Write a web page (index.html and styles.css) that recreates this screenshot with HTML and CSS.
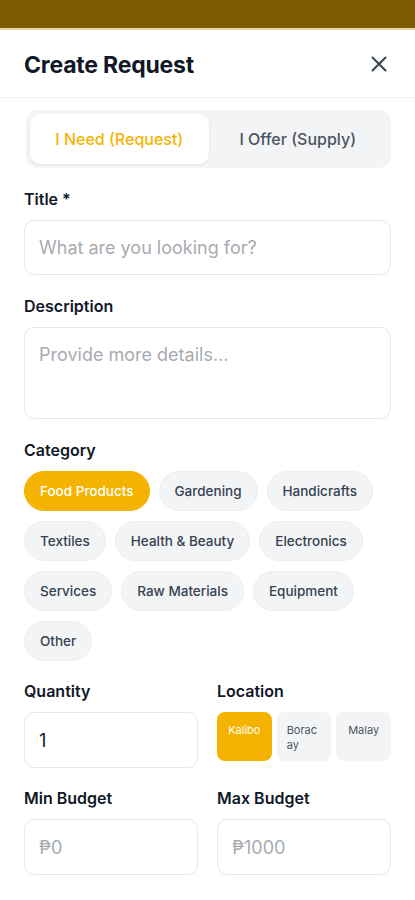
FILE: index.html
```html
<!DOCTYPE html>
<html lang="en">
<head>
  <meta charset="UTF-8">
  <meta name="viewport" content="width=device-width, initial-scale=1.0">
  <title>Create Request</title>
  <link rel="stylesheet" href="styles.css">
</head>
<body>

<div class="topbar"></div>

<div class="sheet">
  <div class="sheet-header">
    <h2>Create Request</h2>
    <button class="close-btn" aria-label="Close">
      <svg width="20" height="20" viewBox="0 0 20 20" fill="none" stroke="#374151" stroke-width="2" stroke-linecap="round">
        <path d="M3.5 3.5L16.5 16.5M16.5 3.5L3.5 16.5"/>
      </svg>
    </button>
  </div>

  <div class="form">
    <div class="segmented">
      <button class="segment active">I Need (Request)</button>
      <button class="segment">I Offer (Supply)</button>
    </div>

    <div class="field">
      <label for="title">Title *</label>
      <input type="text" id="title" class="text-input" placeholder="What are you looking for?">
    </div>

    <div class="field">
      <label for="description">Description</label>
      <textarea id="description" class="text-input textarea" placeholder="Provide more details..."></textarea>
    </div>

    <div class="field category-field">
      <label>Category</label>
      <div class="chips">
        <button class="chip selected">Food Products</button>
        <button class="chip">Gardening</button>
        <button class="chip">Handicrafts</button>
        <button class="chip">Textiles</button>
        <button class="chip">Health &amp; Beauty</button>
        <button class="chip">Electronics</button>
        <button class="chip">Services</button>
        <button class="chip">Raw Materials</button>
        <button class="chip">Equipment</button>
        <button class="chip">Other</button>
      </div>
    </div>

    <div class="row">
      <div class="field">
        <label for="quantity">Quantity</label>
        <input type="text" id="quantity" class="text-input" value="1">
      </div>
      <div class="field">
        <label>Location</label>
        <div class="locations">
          <button class="loc selected">Kalibo</button>
          <button class="loc">Boracay</button>
          <button class="loc">Malay</button>
        </div>
      </div>
    </div>

    <div class="row">
      <div class="field">
        <label for="minBudget">Min Budget</label>
        <input type="text" id="minBudget" class="text-input" placeholder="₱0">
      </div>
      <div class="field">
        <label for="maxBudget">Max Budget</label>
        <input type="text" id="maxBudget" class="text-input" placeholder="₱1000">
      </div>
    </div>
  </div>
</div>

</body>
</html>
```

FILE: styles.css
```css
body {
  margin: 0;
  font-family: Inter, "Noto Sans", sans-serif;
  color: #111827;
  background: #fff;
}
.topbar {
  height: 28px;
  background-color: #7a5b00;
  border-bottom: 2px solid #e6d3a8;
}
.sheet-header {
  display: flex;
  align-items: center;
  justify-content: space-between;
  height: 67px;
  padding: 0 24px;
  border-bottom: 1px solid #f1f1f1;
}
.sheet-header h2 {
  margin: 2px 0 0;
  font-size: 23px;
  font-weight: 700;
  letter-spacing: -0.2px;
  color: #111827;
}
.close-btn {
  background: none;
  border: none;
  padding: 0;
  margin-right: 2px;
  display: flex;
  cursor: pointer;
}
.form {
  padding: 12px 24px 0;
}
button {
  font-family: inherit;
  cursor: pointer;
}
.segmented {
  display: flex;
  padding: 4px;
  background-color: #f3f4f6;
  border-radius: 12px;
  margin-left: 2px;
  margin-bottom: 21px;
}
.segment {
  flex: 1;
  height: 50px;
  border: none;
  border-radius: 10px;
  background: transparent;
  font-size: 16px;
  font-weight: 500;
  color: #4b5563;
}
.segment.active {
  background: #fff;
  color: #f5b301;
  box-shadow: 0 1px 3px rgba(0, 0, 0, 0.08);
}
.field {
  margin-bottom: 21px;
}
.category-field,
.row .field {
  margin-bottom: 20px;
}
label {
  display: block;
  font-size: 16px;
  line-height: 20px;
  font-weight: 600;
  color: #111827;
  margin-bottom: 11px;
}
.text-input {
  display: block;
  width: 100%;
  height: 56px;
  padding: 0 14px;
  border: 1px solid #e5e7eb;
  border-radius: 10px;
  box-sizing: border-box;
  font-family: inherit;
  font-size: 18px;
  color: #111827;
  background: #fff;
  outline: none;
}
#title {
  height: 55px;
}
.text-input::placeholder {
  color: #a8abb1;
}
.textarea {
  height: 92px;
  padding-top: 16px;
  resize: none;
}
.chips {
  display: flex;
  flex-wrap: wrap;
  gap: 10px 9px;
}
.chip {
  height: 40px;
  padding: 0 15px;
  border: 1px solid #eceef1;
  border-radius: 20px;
  background-color: #f3f4f6;
  font-size: 13.5px;
  font-weight: 500;
  color: #374151;
}
.chip.selected {
  background-color: #f5b301;
  border-color: #f5b301;
  color: #fff;
}
.row {
  display: grid;
  grid-template-columns: 1fr 1fr;
  gap: 19px;
}
.locations {
  display: flex;
  gap: 5px;
}
.loc {
  flex: 1;
  height: 49px;
  padding: 11px 10px 0;
  border: none;
  border-radius: 8px;
  background-color: #f3f4f6;
  font-size: 11px;
  line-height: 15px;
  color: #4b5563;
  text-align: left;
  display: flex;
  justify-content: center;
  align-items: flex-start;
  word-break: break-all;
}
.loc.selected {
  background-color: #f5b301;
  color: #fff;
}
```
